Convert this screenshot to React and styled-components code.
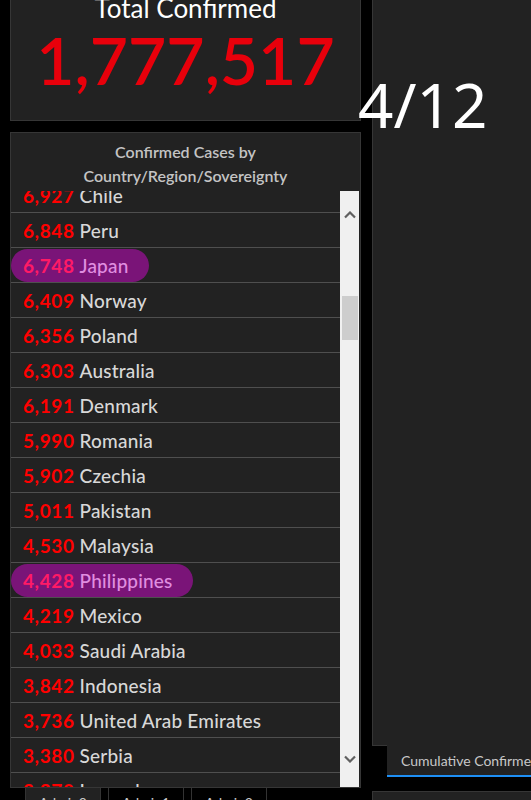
import React from 'react';
import styled, { createGlobalStyle } from 'styled-components';

const GlobalStyle = createGlobalStyle`
  html, body {
    margin: 0;
    padding: 0;
    background: #000;
    overflow: hidden;
  }
  body {
    font-family: Lato, "Noto Sans", "Liberation Sans", sans-serif;
  }
`;

const Page = styled.div`
  position: relative;
  display: flex;
  gap: 11px;
  width: 531px;
  height: 800px;
  padding-left: 10px;
  box-sizing: border-box;
  overflow: hidden;
  background: #000;
`;

const LeftColumn = styled.div`
  display: flex;
  flex-direction: column;
  flex: 0 0 351px;
  margin-top: -20px;
  & > * {
    flex-shrink: 0;
  }
`;

const RightColumn = styled.div`
  display: flex;
  flex-direction: column;
  flex: 0 0 200px;
  margin-top: -2px;
  & > * {
    flex-shrink: 0;
  }
`;

const Panel = styled.div`
  background: #222;
  border: 1px solid #363636;
  box-sizing: border-box;
`;

const TotalPanel = styled(Panel)`
  height: 141px;
  padding-top: 14px;
  text-align: center;
`;

const TotalTitle = styled.div`
  color: #fff;
  font-size: 26px;
  line-height: 26px;
`;

const TotalValue = styled.div`
  margin-top: 6px;
  color: #e8000b;
  font-size: 66px;
  font-weight: 600;
  line-height: 66px;
`;

const ListPanel = styled(Panel)`
  display: flex;
  flex-direction: column;
  height: 656px;
  margin-top: 11px;
`;

const ListHeader = styled.div`
  padding: 7px 0 3px;
  color: #c4c4c4;
  font-size: 16px;
  font-weight: 600;
  line-height: 24px;
  text-align: center;
`;

const ListBody = styled.div`
  display: flex;
  flex: 1;
  min-height: 0;
`;

const Rows = styled.div`
  flex: 1;
  overflow: hidden;
`;

const RowsInner = styled.div`
  margin-top: -13px;
`;

const Row = styled.div`
  display: flex;
  align-items: center;
  height: 35px;
  border-bottom: 1px solid #4f4f4f;
  box-sizing: border-box;
`;

const Entry = styled.div`
  display: inline-flex;
  align-items: center;
  height: 33px;
  padding: 0 ${p => (p.$active ? 20 : 12)}px 0 12px;
  border-radius: 17px;
  background: ${p => (p.$active ? '#7a1478' : 'transparent')};
  font-size: 19px;
  white-space: nowrap;
`;

const Count = styled.span`
  color: ${p => (p.$active ? '#ff1a66' : '#ff0000')};
  font-weight: 700;
  letter-spacing: 0.6px;
`;

const Name = styled.span`
  margin-left: 5px;
  color: ${p => (p.$active ? '#e08ee0' : '#d8d8d8')};
  font-weight: 500;
  letter-spacing: 0.2px;
`;

const Scrollbar = styled.div`
  display: flex;
  flex-direction: column;
  align-items: center;
  flex: 0 0 19px;
  margin-right: 1px;
  background: #f0f0f0;
`;

const Arrow = styled.svg`
  flex: none;
  margin-top: ${p => p.$mt}px;
`;

const Thumb = styled.div`
  width: 16px;
  height: 44px;
  margin-top: 77px;
  background: #cdcdcd;
`;

const Spacer = styled.div`
  flex: ${p => (p.$size ? `0 0 ${p.$size}px` : 1)};
`;

const TabRow = styled.div`
  display: flex;
  gap: 7px;
  padding-left: 15px;
`;

const Tab = styled.div`
  width: 76px;
  height: 30px;
  padding-top: 8px;
  box-sizing: border-box;
  border: 1px solid #333;
  border-top: none;
  background: ${p => (p.$active ? '#222' : '#000')};
  color: #c8c8c8;
  font-size: 14px;
  line-height: 14px;
  text-align: center;
`;

const ChartPanel = styled(Panel)`
  height: 748px;
`;

const ChartTabs = styled.div`
  display: flex;
  padding-left: 15px;
`;

const ChartTab = styled.div`
  flex: 1;
  height: 32px;
  margin-top: -1px;
  padding: 6px 0 0 14px;
  box-sizing: border-box;
  background: #222;
  border-bottom: 2px solid #1e8ff5;
  color: #c8c8c8;
  font-size: 14px;
  line-height: 20px;
  white-space: nowrap;
`;

const LowerPanel = styled(Panel)`
  height: 60px;
  margin-top: 14px;
`;

const DateLabel = styled.div`
  position: absolute;
  left: 358px;
  top: 73px;
  color: #fff;
  font-family: "Noto Sans", "Open Sans", sans-serif;
  font-size: 62px;
  line-height: 62px;
`;

const rows = [
  ['6,927', 'Chile'],
  ['6,848', 'Peru'],
  ['6,748', 'Japan', true],
  ['6,409', 'Norway'],
  ['6,356', 'Poland'],
  ['6,303', 'Australia'],
  ['6,191', 'Denmark'],
  ['5,990', 'Romania'],
  ['5,902', 'Czechia'],
  ['5,011', 'Pakistan'],
  ['4,530', 'Malaysia'],
  ['4,428', 'Philippines', true],
  ['4,219', 'Mexico'],
  ['4,033', 'Saudi Arabia'],
  ['3,842', 'Indonesia'],
  ['3,736', 'United Arab Emirates'],
  ['3,380', 'Serbia'],
  ['3,270', 'Luxembourg'],
  ['3,035', 'Ecuador'],
];

function Chevron({ down, mt }) {
  return (
    <Arrow $mt={mt} width="12" height="8" viewBox="0 0 12 8">
      <path
        d={down ? 'M1 1.5 L6 6.5 L11 1.5' : 'M1 6.5 L6 1.5 L11 6.5'}
        fill="none"
        stroke="#606060"
        strokeWidth="2.2"
      />
    </Arrow>
  );
}

export default function App() {
  return (
    <>
      <GlobalStyle />
      <Page>
        <LeftColumn>
          <TotalPanel>
            <TotalTitle>Total Confirmed</TotalTitle>
            <TotalValue>1,777,517</TotalValue>
          </TotalPanel>

          <ListPanel>
            <ListHeader>
              Confirmed Cases by
              <br />
              Country/Region/Sovereignty
            </ListHeader>
            <ListBody>
              <Rows>
                <RowsInner>
                  {rows.map(([count, name, active]) => (
                    <Row key={name}>
                      <Entry $active={active}>
                        <Count $active={active}>{count}</Count>
                        <Name $active={active}>{name}</Name>
                      </Entry>
                    </Row>
                  ))}
                </RowsInner>
              </Rows>
              <Scrollbar>
                <Chevron mt={20} />
                <Thumb />
                <Spacer />
                <Chevron down mt={0} />
                <Spacer $size={24} />
              </Scrollbar>
            </ListBody>
          </ListPanel>

          <TabRow>
            <Tab $active>Admin0</Tab>
            <Tab>Admin1</Tab>
            <Tab>Admin2</Tab>
          </TabRow>
        </LeftColumn>

        <RightColumn>
          <ChartPanel />
          <ChartTabs>
            <ChartTab>Cumulative Confirmed Cases</ChartTab>
          </ChartTabs>
          <LowerPanel />
        </RightColumn>

        <DateLabel>4/12</DateLabel>
      </Page>
    </>
  );
}
